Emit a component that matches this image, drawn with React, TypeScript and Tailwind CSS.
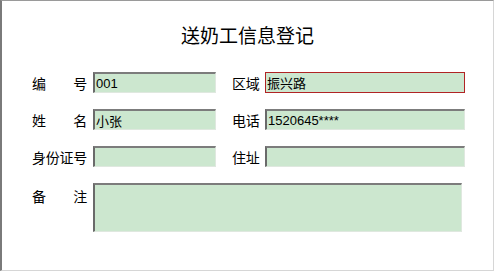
const CN = { fontFamily: '"Noto Sans CJK SC", "DejaVu Sans", sans-serif' };
const TXT = { fontFamily: '"Liberation Sans", "Noto Sans CJK SC", sans-serif' };

function Field({ value, width, red }: { value?: string; width: string; red?: boolean }) {
  const border = red
    ? "border border-[#b02424]"
    : "border-t-2 border-l-2 border-r border-b border-t-[#7c7c7c] border-l-[#6a6a6a] border-r-[#dfe8df] border-b-[#dfe8df]";
  return (
    <div
      className={`h-[21px] ${width} ${border} bg-[#cce7cf] flex items-center pl-[1px] text-[13px] text-black leading-none`}
      style={/[\u4e00-\u9fff]/.test(value ?? "") ? CN : TXT}
    >
      {value}
    </div>
  );
}

function Label({ text, spread, width }: { text: string; spread?: boolean; width: string }) {
  return (
    <div
      className={`flex shrink-0 whitespace-nowrap text-[14px] leading-none text-black tracking-[-0.25px] ${width} ${spread ? "justify-between" : ""}`}
      style={CN}
    >
      {spread ? text.split("").map((c, i) => <span key={i}>{c}</span>) : text}
    </div>
  );
}

export default function App() {
  return (
    <div className="w-[495px] h-[273px] bg-white">
      <div className="w-[494px] h-[271px] border-t border-l-2 border-r border-b border-t-[#9a9a9a] border-l-[#7a7a7a] border-r-[#d6d6d6] border-b-[#d6d6d6] bg-white">
        <div className="pt-[21px] text-center text-[19px] leading-[25px] text-black" style={CN}>
          送奶工信息登记
        </div>

        <div className="pl-[30px] pt-[25px] flex flex-col gap-[16px]">
          <div className="flex items-center">
            <Label text="编号" spread width="w-[55px]" />
            <div className="ml-[6px]"><Field value="001" width="w-[123px]" /></div>
            <div className="ml-[16px]"><Label text="区域" width="w-[28px]" /></div>
            <div className="ml-[5px]"><Field value="振兴路" width="w-[200px]" red /></div>
          </div>
          <div className="flex items-center">
            <Label text="姓名" spread width="w-[55px]" />
            <div className="ml-[6px]"><Field value="小张" width="w-[123px]" /></div>
            <div className="ml-[16px]"><Label text="电话" width="w-[28px]" /></div>
            <div className="ml-[5px]"><Field value="1520645****" width="w-[200px]" /></div>
          </div>
          <div className="flex items-center">
            <Label text="身份证号" width="w-[55px]" />
            <div className="ml-[6px]"><Field width="w-[123px]" /></div>
            <div className="ml-[16px]"><Label text="住址" width="w-[28px]" /></div>
            <div className="ml-[5px]"><Field width="w-[200px]" /></div>
          </div>
          <div className="flex items-start">
            <div className="pt-[6px]"><Label text="备注" spread width="w-[55px]" /></div>
            <div className="ml-[6px] h-[49px] w-[369px] border-t-2 border-l-2 border-r border-b border-t-[#7c7c7c] border-l-[#6a6a6a] border-r-[#dfe8df] border-b-[#dfe8df] bg-[#cce7cf]" />
          </div>
        </div>
      </div>
    </div>
  );
}
